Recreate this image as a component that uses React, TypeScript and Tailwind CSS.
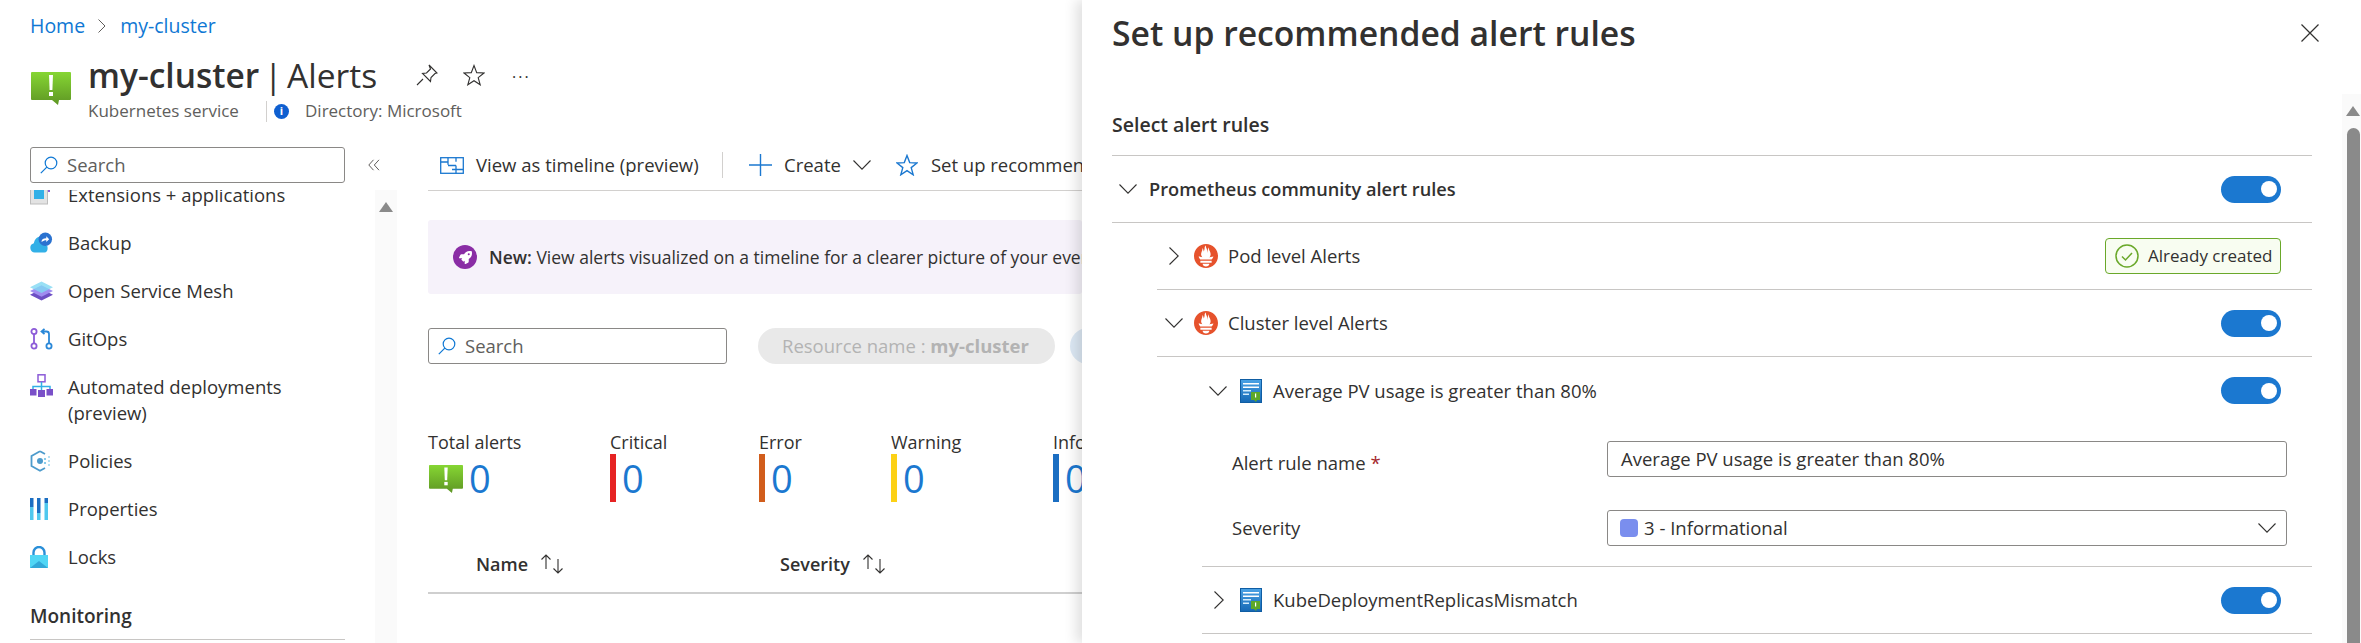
import type { ReactNode } from "react";
import { FaRocket } from "react-icons/fa";
import { SiPrometheus } from "react-icons/si";

function ChevronDown({ className = "w-[18px] h-[10px] shrink-0" }: { className?: string }) {
  return (
    <svg viewBox="0 0 18 10" className={className} fill="none" stroke="#323130" strokeWidth="1.1">
      <path d="M0.5 0.5 9 9.2 17.5 0.5" />
    </svg>
  );
}

function ChevronRight() {
  return (
    <svg viewBox="0 0 10 18" className="w-[10px] h-[18px] shrink-0" fill="none" stroke="#323130" strokeWidth="1.1">
      <path d="M0.5 0.5 9.2 9 0.5 17.5" />
    </svg>
  );
}

function AlertIcon({ id, className }: { id: string; className: string }) {
  return (
    <svg viewBox="0 0 40 34" className={className}>
      <defs>
        <linearGradient id={id} x1="0" y1="0" x2="0" y2="1">
          <stop offset="0" stopColor="#86d633" />
          <stop offset="1" stopColor="#5e9624" />
        </linearGradient>
      </defs>
      <path d="M1 1h38a1 1 0 0 1 1 1v26a1 1 0 0 1-1 1H28l-1 5-6-5H1a1 1 0 0 1-1-1V2a1 1 0 0 1 1-1z" fill={`url(#${id})`} />
      <path d="M18 4h4l-.6 15h-2.800z" fill="#fff" />
      <rect x="18" y="21" width="4" height="4" fill="#fff" />
    </svg>
  );
}

function SearchIcon() {
  return (
    <svg viewBox="0 0 18 18" className="w-[18px] h-[18px] shrink-0" fill="none" stroke="#0f78d4" strokeWidth="1.2">
      <circle cx="11" cy="7" r="5.800" />
      <path d="M6.800 11.200 0.800 17.200" />
    </svg>
  );
}

function SearchBox({ className }: { className: string }) {
  return (
    <div className={`flex items-center h-[36px] border border-[#8a8886] rounded-[3px] bg-white pl-[9px] ${className}`}>
      <SearchIcon />
      <span className="ml-[9px] text-[#605e5c]">Search</span>
    </div>
  );
}

function Toggle() {
  return (
    <div className="flex items-center justify-end w-[60px] h-[27px] rounded-full bg-[#1b78d0] pr-[4px] shrink-0">
      <div className="w-[16px] h-[16px] rounded-full bg-white" />
    </div>
  );
}

function PrometheusIcon() {
  return <SiPrometheus className="w-[24px] h-[24px] shrink-0 text-[#e6522c]" />;
}

function RuleIcon({ id }: { id: string }) {
  return (
    <svg viewBox="0 0 22 24" className="w-[22px] h-[24px] shrink-0">
      <defs>
        <linearGradient id={id} x1="0" y1="0" x2="0" y2="1">
          <stop offset="0" stopColor="#4ba3e6" />
          <stop offset="1" stopColor="#1568b4" />
        </linearGradient>
      </defs>
      <rect x="0.500" y="0.500" width="21" height="23" fill={`url(#${id})`} stroke="#0f5da3" />
      <rect x="3" y="4" width="16" height="1.500" fill="#fff" />
      <rect x="3" y="7.500" width="16" height="1.500" fill="#fff" />
      <rect x="3" y="11" width="8" height="1.500" fill="#d4ecfb" />
      <rect x="3" y="14.500" width="6" height="1.500" fill="#d4ecfb" />
      <path d="M11 13h9v8h-3l-1 2-2-2h-3z" fill="#5ea828" />
      <rect x="15" y="14.500" width="1.200" height="4" fill="#fff" />
    </svg>
  );
}

function SortArrows() {
  return (
    <svg viewBox="0 0 25 20" className="w-[25px] h-[20px]" fill="none" stroke="#323130" strokeWidth="1.100">
      <path d="M6 15V1M1.500 5.500 6 1l4.500 4.500" />
      <path d="M18 5v14M13.500 14.500 18 19l4.500-4.500" />
    </svg>
  );
}

const navIcons: Record<string, ReactNode> = {
  extensions: (
    <svg viewBox="0 0 20 20" className="w-[20px] h-[20px]">
      <rect x="0.500" y="3" width="17" height="16" fill="#e3e3e3" stroke="#bdbdbd" />
      <rect x="4" y="5" width="10" height="9" fill="#32b0e7" />
      <rect x="18" y="5" width="2" height="2" fill="#8c5bd8" />
    </svg>
  ),
  backup: (
    <svg viewBox="0 0 24 22" className="w-[23px] h-[22px]">
      <path d="M5 21a5 5 0 0 1-1-9.800C5 6 9 3 13 5c-1 3 2 8 5 9 1 3 0 7-3 7z" fill="#32b0e7" />
      <circle cx="16" cy="7" r="7" fill="#2a72d0" />
      <path d="M12 10c0-3 2-4 5-4V4l3 3-3 3V8c-2 0-3 .5-5 2z" fill="#fff" />
    </svg>
  ),
  mesh: (
    <svg viewBox="0 0 24 20" className="w-[23px] h-[20px]">
      <path d="M12 8l12 6-12 6-12-6z" fill="#6d4fc4" />
      <path d="M12 4l12 6-12 6-12-6z" fill="#a08cf0" />
      <path d="M12 0l12 6-12 6-12-6z" fill="#7fd8f2" opacity=".8" />
    </svg>
  ),
  gitops: (
    <svg viewBox="0 0 23 22" className="w-[23px] h-[22px]" fill="none" strokeWidth="1.800">
      <circle cx="4" cy="3.500" r="2.600" stroke="#8c5bd8" />
      <circle cx="4" cy="18" r="2.600" stroke="#8c5bd8" />
      <path d="M4 6v9.500" stroke="#8c5bd8" />
      <circle cx="19" cy="18" r="2.600" stroke="#2a88d8" />
      <path d="M19 15.500V6a2.500 2.500 0 0 0-2.500-2.500H12M14.500 .8 11.500 3.500l3 2.700" stroke="#2a88d8" />
    </svg>
  ),
  deploy: (
    <svg viewBox="0 0 23 23" className="w-[23px] h-[23px]">
      <rect x="8" y="0.800" width="7" height="7" fill="#fff" stroke="#8c5bd8" strokeWidth="1.500" />
      <path d="M11.500 8v8M3 16v-3.500h17V16" fill="none" stroke="#32b0e7" strokeWidth="1.500" />
      <rect x="0" y="15" width="6.500" height="6.500" fill="#7a50c8" />
      <rect x="8" y="16" width="7" height="7" fill="#7a50c8" />
      <rect x="16.500" y="15" width="6.500" height="6.500" fill="#7a50c8" />
    </svg>
  ),
  policies: (
    <svg viewBox="0 0 21 22" className="w-[21px] h-[22px]">
      <path d="M10 1.200 1.500 6v10l8.500 4.800 5-2.800M15 4l-5-2.800" fill="none" stroke="#4d9bcc" strokeWidth="1.800" />
      <circle cx="10" cy="11" r="3" fill="#4d9bcc" />
      <circle cx="15" cy="9" r="1.100" fill="#6cc0e6" />
      <circle cx="15" cy="13" r="1.100" fill="#6cc0e6" />
      <circle cx="19" cy="7" r="1" fill="#9cd6ef" />
      <circle cx="19" cy="11" r="1" fill="#9cd6ef" />
      <circle cx="19" cy="15" r="1" fill="#9cd6ef" />
    </svg>
  ),
  properties: (
    <svg viewBox="0 0 18 22" className="w-[18px] h-[22px]">
      <rect x="0" y="0" width="3.500" height="9" fill="#1b6ec2" />
      <rect x="0" y="9" width="3.500" height="13" fill="#50c8ee" />
      <rect x="7" y="0" width="3.500" height="15" fill="#1b6ec2" />
      <rect x="7" y="15" width="3.500" height="7" fill="#50c8ee" />
      <rect x="14.500" y="0" width="3.500" height="5" fill="#1b6ec2" />
      <rect x="14.500" y="5" width="3.500" height="17" fill="#50c8ee" />
    </svg>
  ),
  locks: (
    <svg viewBox="0 0 18 22" className="w-[18px] h-[22px]">
      <path d="M3.500 9V6.500a5.500 5.500 0 0 1 11 0V9" fill="none" stroke="#2a8fd8" strokeWidth="2.400" />
      <rect x="0" y="9" width="18" height="13" fill="#50d6f5" />
      <path d="M0 22l9-7 9 7z" fill="#32a8d8" />
    </svg>
  ),
};

const navItems = [
  { key: "extensions", label: "Extensions + applications" },
  { key: "backup", label: "Backup" },
  { key: "mesh", label: "Open Service Mesh" },
  { key: "gitops", label: "GitOps" },
  { key: "deploy", label: "Automated deployments (preview)", tall: true },
  { key: "policies", label: "Policies" },
  { key: "properties", label: "Properties" },
  { key: "locks", label: "Locks" },
];

const summary = [
  { label: "Critical", color: "bg-[#e62323]", width: "w-[149px]" },
  { label: "Error", color: "bg-[#d15d1c]", width: "w-[132px]" },
  { label: "Warning", color: "bg-[#fcd116]", width: "w-[162px]" },
  { label: "Informational", color: "bg-[#1b6ec2]", width: "w-[162px]" },
];

function Sidebar() {
  return (
    <aside className="w-[397px] shrink-0 flex flex-col overflow-hidden">
      <div className="flex items-center h-[36px] pl-[30px]">
        <SearchBox className="w-[315px]" />
        <svg viewBox="0 0 12 12" className="ml-[23px] w-[12px] h-[12px]" fill="none" stroke="#605e5c" strokeWidth="1">
          <path d="M5.500 .8.800 6l4.700 5.200M11 .8 6.300 6l4.700 5.200" />
        </svg>
      </div>
      <div className="flex flex-1 mt-[7px] overflow-hidden">
        <div className="w-[345px] ml-[30px] overflow-hidden">
          <nav className="-mt-[19px]">
            {navItems.map((item) => (
              <div
                key={item.key}
                className={`flex ${item.tall ? "h-[74px] pt-[11px]" : "h-[48px] items-center"}`}
              >
                <div className="w-[38px] shrink-0">{navIcons[item.key]}</div>
                <span className={`leading-[26px] ${item.tall ? "w-[260px]" : ""}`}>{item.label}</span>
              </div>
            ))}
          </nav>
          <div className="w-[315px] pt-[22px] pb-[10px] border-b border-[#c8c6c4] font-semibold text-[19px] leading-[26px]">Monitoring</div>
        </div>
        <div className="w-[22px] bg-[#fafafa] pl-[4px] pt-[12px]">
          <svg viewBox="0 0 14 10" className="w-[14px] h-[10px]">
            <path d="M7 0 14 10H0z" fill="#8a8a8a" />
          </svg>
        </div>
      </div>
    </aside>
  );
}

function AlertsContent() {
  return (
    <main className="flex-1 min-w-0 overflow-hidden pl-[31px]">
      <div className="flex items-center h-[36px] mb-[7px] whitespace-nowrap">
        <svg viewBox="0 0 24 17" className="ml-[12px] w-[24px] h-[17px] shrink-0" fill="none" stroke="#1b78d0" strokeWidth="1.300">
          <rect x="0.700" y="0.700" width="22.600" height="15.600" />
          <path d="M8 .7v7M.7 5H8M8 8.500h8M16 8.500v8M16 .7v4M12 12.500h11.300" />
        </svg>
        <span className="ml-[12px] w-[222px] shrink-0">View as timeline (preview)</span>
        <div className="ml-[24px] w-px h-[26px] bg-[#d2d0ce] shrink-0" />
        <svg viewBox="0 0 23 22" className="ml-[26px] w-[23px] h-[22px] shrink-0" fill="none" stroke="#1b78d0" strokeWidth="1.400">
          <path d="M11.500 0v22M0 11h23" />
        </svg>
        <span className="ml-[12px] shrink-0">Create</span>
        <ChevronDown className="ml-[12px] w-[18px] h-[10px] shrink-0" />
        <svg viewBox="0 0 22 22" className="ml-[25px] w-[22px] h-[22px] shrink-0" fill="none" stroke="#1b78d0" strokeWidth="1.400">
          <path d="M11 1.500 13.700 8.600 21 9l-5.800 4.600 2 7.200L11 16.700 4.800 20.800l2-7.200L1 9l7.300-.4z" />
        </svg>
        <span className="ml-[13px] shrink-0">Set up recommended alert rules</span>
      </div>
      <div className="h-px bg-[#d2d0ce]" />

      <div className="flex items-center mt-[29px] h-[74px] pl-[25px] bg-[#f6f2fa] rounded-[3px] whitespace-nowrap">
        <div className="flex items-center justify-center w-[24px] h-[24px] rounded-full bg-[#8a2da5] shrink-0">
          <FaRocket className="w-[13px] h-[13px] text-white" />
        </div>
        <span className="ml-[12px] text-[17.500px]">
          <span className="font-semibold">New:</span> View alerts visualized on a timeline for a clearer picture of your events and their impact
        </span>
      </div>

      <div className="flex items-center mt-[34px] h-[36px] whitespace-nowrap">
        <SearchBox className="w-[299px] shrink-0" />
        <div className="flex items-center ml-[31px] w-[297px] h-[36px] pl-[24px] rounded-full bg-[#e9e9e9] text-[#b3b3b3] shrink-0">
          Resource name :&nbsp;<span className="font-bold">my-cluster</span>
        </div>
        <div className="ml-[15px] w-[200px] h-[36px] rounded-full bg-[#dde9f5] shrink-0" />
      </div>

      <div className="flex mt-[66px] whitespace-nowrap">
        <div className="w-[182px] shrink-0">
          <div className="h-[24px] leading-[24px] text-[18px]">Total alerts</div>
          <div className="flex items-center h-[48px]">
            <AlertIcon id="alert-small" className="w-[34px] h-[29px] ml-px" />
            <span className="ml-[6px] text-[38px] font-medium leading-[48px] text-[#1b78d0]">0</span>
          </div>
        </div>
        {summary.map((s) => (
          <div key={s.label} className={`${s.width} shrink-0`}>
            <div className="h-[24px] leading-[24px] text-[18px]">{s.label}</div>
            <div className="flex items-center h-[48px]">
              <div className={`w-[6px] h-[48px] ${s.color}`} />
              <span className="ml-[6px] text-[38px] font-medium leading-[48px] text-[#1b78d0]">0</span>
            </div>
          </div>
        ))}
      </div>

      <div className="flex mt-[40px] h-[52px] pb-[6px] border-b-2 border-[#cfcfcf] font-semibold text-[18px]">
        <div className="flex items-center w-[352px] pl-[48px]">
          Name
          <span className="ml-[12px]"><SortArrows /></span>
        </div>
        <div className="flex items-center">
          Severity
          <span className="ml-[12px]"><SortArrows /></span>
        </div>
      </div>
    </main>
  );
}

function Row({
  className,
  chevron,
  icon,
  label,
  right,
}: {
  className: string;
  chevron: ReactNode;
  icon?: ReactNode;
  label: ReactNode;
  right: ReactNode;
}) {
  return (
    <div className={`flex items-center pr-[31px] ${className}`}>
      {chevron}
      {icon}
      <div className="flex-1">{label}</div>
      {right}
    </div>
  );
}

function ChevronBox({ className, open }: { className: string; open?: boolean }) {
  return (
    <div className={`flex items-center justify-center shrink-0 ${className}`}>
      {open ? <ChevronDown /> : <ChevronRight />}
    </div>
  );
}

function RulesPanel() {
  return (
    <section className="relative z-10 flex-1 min-w-0 flex flex-col bg-white shadow-[-6px_0_12px_rgba(0,0,0,0.12)]">
      <div className="flex items-center justify-between h-[66px] pl-[30px] pr-[42px]">
        <h1 className="text-[33.7px] font-semibold leading-[68px]">Set up recommended alert rules</h1>
        <svg viewBox="0 0 18 18" className="w-[18px] h-[18px]" fill="none" stroke="#323130" strokeWidth="1.200">
          <path d="M.5.5l17 17M17.500.5l-17 17" />
        </svg>
      </div>
      <div className="flex flex-1 mt-[28px]">
        <div className="w-[1200px] ml-[30px]">
          <div className="flex items-center h-[62px] border-b border-[#c8c6c4] font-semibold text-[19.500px]">Select alert rules</div>

          <Row
            className="h-[67px] border-b border-[#c8c6c4] ml-0"
            chevron={<ChevronBox className="w-[32px] mr-[5px]" open />}
            label={<span className="font-semibold text-[18.200px]">Prometheus community alert rules</span>}
            right={<Toggle />}
          />
          <div className="ml-[45px]">
            <div className="border-b border-[#c8c6c4]">
              <Row
                className="h-[66px]"
                chevron={<ChevronBox className="w-[34px] mr-[3px]" />}
                icon={<div className="mr-[10px]"><PrometheusIcon /></div>}
                label="Pod level Alerts"
                right={
                  <div className="flex items-center w-[176px] h-[36px] pl-[9px] border border-[#6aa82a] rounded-[4px] bg-[#f8fdf1] text-[17px]">
                    <svg viewBox="0 0 24 24" className="w-[24px] h-[24px]" fill="none" stroke="#6aa82a" strokeWidth="1.500">
                      <circle cx="12" cy="12" r="11" />
                      <path d="M7 12.500l3.500 3.500L17 9" />
                    </svg>
                    <span className="ml-[9px] whitespace-nowrap">Already created</span>
                  </div>
                }
              />
            </div>
            <Row
              className="h-[67px] border-b border-[#c8c6c4]"
              chevron={<ChevronBox className="w-[34px] mr-[3px]" open />}
              icon={<div className="mr-[10px]"><PrometheusIcon /></div>}
              label="Cluster level Alerts"
              right={<Toggle />}
            />
            <div className="ml-[45px]">
              <div className="border-b border-[#c8c6c4] pb-[20px]">
                <Row
                  className="h-[67px]"
                  chevron={<ChevronBox className="w-[32px] mr-[6px]" open />}
                  icon={<div className="mr-[11px]"><RuleIcon id="rule-a" /></div>}
                  label="Average PV usage is greater than 80%"
                  right={<Toggle />}
                />
                <div className="flex items-center mt-[17px] pl-[30px]">
                  <div className="w-[375px] pt-[8px]">
                    Alert rule name <span className="text-[#a4262c]">*</span>
                  </div>
                  <div className="flex items-center w-[680px] h-[36px] pl-[13px] border border-[#8a8886] rounded-[3px]">
                    Average PV usage is greater than 80%
                  </div>
                </div>
                <div className="flex items-center mt-[33px] pl-[30px]">
                  <div className="w-[375px]">Severity</div>
                  <div className="flex items-center w-[680px] h-[36px] pl-[12px] pr-[10px] border border-[#8a8886] rounded-[3px]">
                    <div className="w-[18px] h-[18px] rounded-[4px] bg-[#7a8eee]" />
                    <span className="flex-1 ml-[6px]">3 - Informational</span>
                    <ChevronDown />
                  </div>
                </div>
              </div>
              <Row
                className="h-[67px] border-b border-[#c8c6c4]"
                chevron={<ChevronBox className="w-[34px] mr-[4px]" />}
                icon={<div className="mr-[11px]"><RuleIcon id="rule-b" /></div>}
                label="KubeDeploymentReplicasMismatch"
                right={<Toggle />}
              />
            </div>
          </div>
        </div>

        <div className="ml-auto w-[19px] bg-[#fafafa] pt-[12px] pl-[4px] flex flex-col overflow-hidden">
          <svg viewBox="0 0 14 10" className="w-[14px] h-[10px] shrink-0">
            <path d="M7 0 14 10H0z" fill="#8a8a8a" />
          </svg>
          <div className="flex-1 mt-[12px] w-[13px] ml-px rounded-t-full bg-[#8a8a8a]" />
        </div>
      </div>
    </section>
  );
}

export default function App() {
  return (
    <div className="flex h-[643px] overflow-hidden bg-white text-[18.500px] text-[#323130] font-['Open_Sans',sans-serif]">
      <div className="w-[1082px] shrink-0 flex flex-col overflow-hidden">
        <div className="flex items-center h-[52px] pl-[30px] text-[#0f78d4] text-[19.500px]">
          <span>Home</span>
          <svg viewBox="0 0 8 14" className="ml-[13px] w-[8px] h-[14px]" fill="none" stroke="#605e5c" strokeWidth="1">
            <path d="M.5.5 7 7 .5 13.500" />
          </svg>
          <span className="ml-[14px]">my-cluster</span>
        </div>

        <div className="flex h-[95px] pl-[31px]">
          <AlertIcon id="alert-big" className="w-[40px] h-[34px] mt-[19px] mr-[17px] shrink-0" />
          <div>
            <div className="flex items-center h-[46px]">
              <span className="text-[33.500px] w-[290px] whitespace-nowrap [word-spacing:-4px]">
                <span className="font-semibold">my-cluster</span> | Alerts
              </span>
              <svg viewBox="0 0 22 22" className="ml-[38px] w-[22px] h-[22px]" fill="none" stroke="#323130" strokeWidth="1.100">
                <path d="M13 1l8 8-2 .5-4 4-.5 4-8-8 4-.5 4-4zM7 15l-6 6" />
              </svg>
              <svg viewBox="0 0 22 22" className="ml-[25px] w-[22px] h-[22px]" fill="none" stroke="#323130" strokeWidth="1.100">
                <path d="M11 1.500 13.700 8.600 21 9l-5.800 4.600 2 7.200L11 16.700 4.800 20.800l2-7.200L1 9l7.300-.4z" />
              </svg>
              <span className="ml-[27px] text-[16px] tracking-[2px] -mt-[6px]">...</span>
            </div>
            <div className="flex items-center h-[26px] text-[#605e5c] text-[17px]">
              <span className="w-[178px]">Kubernetes service</span>
              <div className="w-px h-[21px] bg-[#d2d0ce]" />
              <div className="ml-[7px] flex items-center justify-center w-[15px] h-[15px] rounded-full bg-[#0f5fd0] text-white text-[11px] font-bold">i</div>
              <span className="ml-[16px]">Directory: Microsoft</span>
            </div>
          </div>
        </div>

        <div className="flex flex-1 min-h-0">
          <Sidebar />
          <AlertsContent />
        </div>
      </div>
      <RulesPanel />
    </div>
  );
}
